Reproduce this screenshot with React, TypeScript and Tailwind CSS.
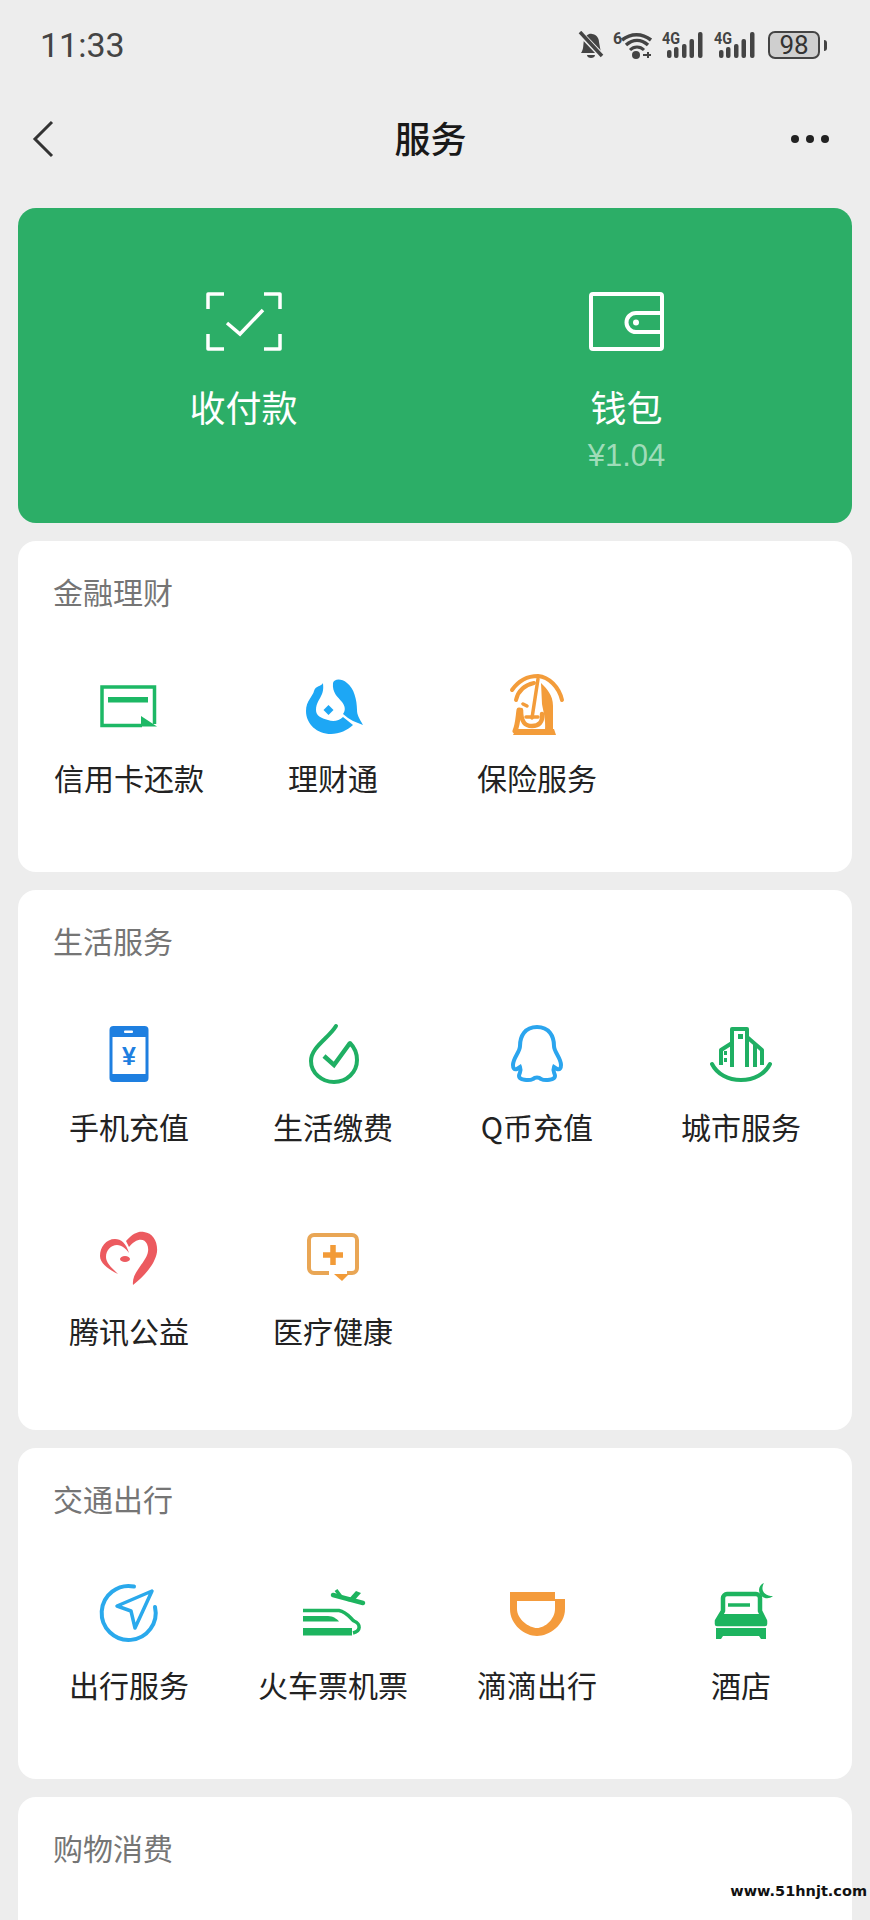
import React from "react";

const cjk = "font-['Noto_Sans_CJK_SC','Liberation_Sans',sans-serif]";

const Svg = ({ children }: { children: React.ReactNode }) => (
  <svg width="64" height="64" viewBox="0 0 64 64" fill="none" className="block overflow-visible">{children}</svg>
);

const CardIcon = () => (
  <Svg>
    <path d="M45 51.5H5V13H57.5V50" stroke="#1DB865" strokeWidth="3.5" />
    <rect x="11" y="23" width="40" height="5.5" fill="#1DB865" />
    <path d="M44 42L60 52.5H44Z" fill="#1DB865" />
  </Svg>
);

const FishIcon = () => (
  <Svg>
    <path d="M32 9C33 5 40 4 46 9C53 14 56 26 56 36C56 41 58 44 62 51L52 47L47 44L42 40C45 36 44 32 41 28C37 23 31 19 32 9Z" fill="#1DA7F5" />
    <path d="M22 9C20 13 15 11 13 17C12 22 5 27 5 37C5 50 16 60 30 60C38 60 47 56 52 51L42 43C38 47 32 48 27 46C20 44 15 42 15 36C15 29 19 25 21 20C23 15 22 11 22 9Z" fill="#1DA7F5" />
    <path d="M27.5 31L32.5 36L27.5 41L22.5 36Z" fill="#1DA7F5" />
  </Svg>
);

const InsuranceIcon = () => (
  <Svg>
    <g stroke="#F39C3A" strokeLinecap="round">
      <path d="M7 16C14 6 24 2 33 2C44 3 54 13 57 26" strokeWidth="4" />
      <path d="M11 26C13 17 20 11 29 9" strokeWidth="4" />
      <path d="M33 5L27 44" strokeWidth="3.5" />
      <path d="M14 36C13 42 13 50 10 57" strokeWidth="5" />
      <path d="M16 36C16 48 20 52 27 52C34 52 38 48 37 40" strokeWidth="4.5" />
      <path d="M18 30L22 32" strokeWidth="3.5" />
      <path d="M21 43H33" strokeWidth="3.5" />
    </g>
    <path d="M36 9C42 15 48 21 48 32V56H40C41 46 38 36 37 30Z" fill="#F39C3A" />
    <path d="M8 61L11 55H49L51 61Z" fill="#F39C3A" />
  </Svg>
);

const PhoneIcon = () => (
  <Svg>
    <rect x="12.5" y="3" width="39" height="56" rx="4" fill="#1E7FE0" />
    <rect x="15.5" y="14" width="33" height="37" fill="#fff" />
    <rect x="27" y="7.5" width="9" height="2.5" rx="1" fill="#fff" />
    <text x="32" y="42" textAnchor="middle" fontSize="25" fontWeight="700" fill="#1E7FE0" fontFamily="Liberation Sans">¥</text>
  </Svg>
);

const LifeIcon = () => (
  <Svg>
    <path d="M35 3C28 15 10 24 10 38C10 50 21 59 33 59C46 59 56 49 56 37C56 30 53 24 49 20" stroke="#1FAF63" strokeWidth="4" strokeLinecap="round" />
    <path d="M23 33L33 42L49 20" stroke="#1FAF63" strokeWidth="4.5" />
  </Svg>
);

const QqIcon = () => (
  <Svg>
    <path d="M32 4C20 4 15 13 15 23C15 29 8 35 8 42C8 45 9 47 12 46L15 44C17 49 14 50 14 53C14 57 24 58 28 56C30 54 34 54 36 56C40 58 50 57 50 53C50 50 47 49 49 44L52 46C55 47 56 45 56 42C56 35 49 29 49 23C49 13 44 4 32 4Z" stroke="#2BA5EE" strokeWidth="4" />
  </Svg>
);

const CityIcon = () => (
  <Svg>
    <g stroke="#1FAF63" strokeWidth="4" strokeLinejoin="round">
      <path d="M3 41C8 51 19 57 32 57C45 57 56 51 61 41" strokeLinecap="round" />
      <path d="M23 44V6H38V44" />
      <path d="M12 42V27L23 20" />
      <path d="M38 14L53 27V42" />
      <path d="M46 22V44" />
    </g>
    <rect x="29" y="11" width="5" height="5" fill="#1FAF63" />
    <rect x="15" y="28" width="3" height="4" fill="#1FAF63" />
    <rect x="15" y="35" width="3" height="4" fill="#1FAF63" />
  </Svg>
);

const HeartIcon = () => (
  <Svg>
    <path d="M29 14C36 6 42 4 47 5C56 6 61 15 60 25C58 38 46 50 36 58C35 50 40 44 44 38C50 30 53 24 50 17C47 10 38 12 32 20Z" fill="#EC5A5F" />
    <path d="M32 26C29 16 24 12 18 12C9 12 3 20 3 29C3 37 13 43 21 47C15 41 9 36 9 30C9 23 14 18 20 18C25 18 29 22 32 26Z" fill="#EC5A5F" />
    <ellipse cx="28" cy="32" rx="5" ry="3" fill="#EC5A5F" />
  </Svg>
);

const MedicalIcon = () => (
  <Svg>
    <path d="M28 46H13A5 5 0 0 1 8 41V13A5 5 0 0 1 13 8H51A5 5 0 0 1 56 13V41A5 5 0 0 1 51 46H46" stroke="#E9A655" strokeWidth="4" />
    <path d="M33 47H48L41 54Z" fill="#F29B38" />
    <path d="M22 28H42M32 18V38" stroke="#F29B38" strokeWidth="5.5" />
  </Svg>
);

const NavIcon = () => (
  <Svg>
    <path d="M37 5.5A27 27 0 1 0 58 26" stroke="#2AA9EC" strokeWidth="4" strokeLinecap="round" />
    <path d="M55 10L20 25L34 30L38 47Z" stroke="#2AA9EC" strokeWidth="3.5" strokeLinejoin="round" />
  </Svg>
);

const TrainIcon = () => (
  <Svg>
    <path d="M32 14L62 22" stroke="#1DB45F" strokeWidth="4.5" strokeLinecap="round" />
    <path d="M55 10L46 20L52 21L60 12Z" fill="#1DB45F" />
    <path d="M35 9L41 17" stroke="#1DB45F" strokeWidth="3.5" />
    <path d="M2 29.5H38C46 31 50 38 53 40C60 43 60 50 52 52" stroke="#1DB45F" strokeWidth="3.5" />
    <path d="M2 35H27C32 35 36 38 38 40.5H2Z" fill="#1DB45F" />
    <rect x="2" y="47" width="49" height="7.5" fill="#1DB45F" />
  </Svg>
);

const DidiIcon = () => (
  <Svg>
    <path fillRule="evenodd" d="M5 11H50V18H60V28C60 44 44 55 32 55C20 55 5 44 5 28ZM12 20V28C12 38 24 47 32 47C40 47 50 38 50 28V20Z" fill="#F49B3C" />
  </Svg>
);

const HotelIcon = () => (
  <Svg>
    <path d="M14 30V17C14 15 16 13 18 13H47C49 13 51 15 51 17V30L56 40V43H8V40Z" stroke="#1DB45F" strokeWidth="4.5" strokeLinejoin="round" />
    <path d="M19 24H41" stroke="#1DB45F" strokeWidth="3.5" />
    <path d="M13 33H52L56 42H8Z" fill="#1DB45F" />
    <path d="M7 47H57V58H52L50 55H14L12 58H7Z" fill="#1DB45F" />
    <path d="M55 2C51 9 55 15 64 15C58 20 50 16 50 9C50 6 52 3 55 2Z" fill="#1DB45F" />
  </Svg>
);

const sections = [
  {
    title: "金融理财",
    pb: "pb-[75px]",
    items: [
      { label: "信用卡还款", icon: <CardIcon /> },
      { label: "理财通", icon: <FishIcon /> },
      { label: "保险服务", icon: <InsuranceIcon /> },
    ],
  },
  {
    title: "生活服务",
    pb: "pb-[80px]",
    items: [
      { label: "手机充值", icon: <PhoneIcon /> },
      { label: "生活缴费", icon: <LifeIcon /> },
      { label: "Q币充值", icon: <QqIcon /> },
      { label: "城市服务", icon: <CityIcon /> },
      { label: "腾讯公益", icon: <HeartIcon /> },
      { label: "医疗健康", icon: <MedicalIcon /> },
    ],
  },
  {
    title: "交通出行",
    pb: "pb-[75px]",
    items: [
      { label: "出行服务", icon: <NavIcon /> },
      { label: "火车票机票", icon: <TrainIcon /> },
      { label: "滴滴出行", icon: <DidiIcon /> },
      { label: "酒店", icon: <HotelIcon /> },
    ],
  },
];

const Signal = () => (
  <svg width="42" height="28" viewBox="0 0 42 28" className="block overflow-visible">
    <text x="0" y="13" fontSize="17" fontWeight="700" fill="#444" fontFamily="Roboto" textLength="18" lengthAdjust="spacingAndGlyphs">4G</text>
    <rect x="5" y="19" width="4.5" height="8" rx="2" fill="#444" />
    <rect x="12" y="16" width="4.5" height="11" rx="2" fill="#444" />
    <rect x="20" y="13" width="4.5" height="14" rx="2" fill="#444" />
    <rect x="27.5" y="8" width="4.5" height="19" rx="2" fill="#444" />
    <rect x="36" y="1" width="4.5" height="26" rx="2" fill="#444" />
  </svg>
);

export default function App() {
  return (
    <div className={`relative h-[1920px] w-[870px] overflow-hidden bg-[#ededed] ${cjk}`}>
      {/* status bar */}
      <div className="flex h-[90px] items-center justify-between pl-[40px] pr-[43px]">
        <span className="font-['Roboto',sans-serif] text-[34px] leading-none text-[#444]">11:33</span>
        <div className="flex items-center">
          <svg width="26" height="28" viewBox="0 0 26 28" className="block">
            <path d="M3 22C6 18 5 13 6 9C7 5 11 2 14 3C18 3 21 7 21 11L23 22Z" fill="#444" />
            <path d="M9 24H17C17 28 9 28 9 24Z" fill="#444" />
            <path d="M3 3L25 26" stroke="#ededed" strokeWidth="6" />
            <path d="M2 1L24 25" stroke="#444" strokeWidth="3.5" />
          </svg>
          <svg width="39" height="28" viewBox="0 0 39 28" className="ml-[9px] block overflow-visible">
            <text x="0" y="13" fontSize="16" fontWeight="700" fill="#444" fontFamily="Roboto">6</text>
            <path d="M9 9C18 2 29 2 38 9" stroke="#444" strokeWidth="3.5" fill="none" />
            <path d="M13 14C20 8 28 8 35 14" stroke="#444" strokeWidth="3.5" fill="none" />
            <path d="M17 19C21 15 27 15 31 19" stroke="#444" strokeWidth="3" fill="none" />
            <circle cx="23" cy="24" r="4" fill="#444" />
            <path d="M30 24H38M35 21V27" stroke="#444" strokeWidth="2" />
          </svg>
          <div className="ml-[10px]"><Signal /></div>
          <div className="ml-[10px]"><Signal /></div>
          <div className="ml-[12px] flex h-[28px] w-[52px] items-center justify-center rounded-[7px] border-[2.5px] border-[#444] bg-[#cfcfcf] font-['Roboto',sans-serif] text-[26px] leading-none text-[#333]">98</div>
          <div className="ml-[4px] h-[11px] w-[3px] rounded-r-sm bg-[#444]" />
        </div>
      </div>

      {/* nav */}
      <div className="mb-[20px] flex h-[98px] items-center pl-[32px] pr-[41px]">
        <div className="w-[100px]">
          <svg width="22" height="38" viewBox="0 0 22 38" className="block">
            <path d="M20 2L3 19L20 36" stroke="#333" strokeWidth="3" fill="none" />
          </svg>
        </div>
        <span className="mb-[4px] flex-1 text-center text-[36px] font-medium leading-none text-[#191919]">服务</span>
        <div className="flex w-[100px] justify-end gap-[7px]">
          <div className="h-[8px] w-[8px] rounded-full bg-[#222]" />
          <div className="h-[8px] w-[8px] rounded-full bg-[#222]" />
          <div className="h-[8px] w-[8px] rounded-full bg-[#222]" />
        </div>
      </div>

      {/* wallet card */}
      <div className="mx-[18px] grid h-[315px] grid-cols-2 rounded-[18px] bg-[#2cae67] px-[34px] pt-[84px] text-white">
        <div className="flex flex-col items-center">
          <svg width="76" height="59" viewBox="0 0 76 59" fill="none" stroke="#fff" strokeWidth="3.5" className="block">
            <path d="M18 2H2V17M58 2H74V17M18 57H2V42M58 57H74V42" strokeLinejoin="round" />
            <path d="M21 31L34 42L57 18" />
          </svg>
          <span className="mt-[31px] text-[36px] leading-[48px]">收付款</span>
        </div>
        <div className="flex flex-col items-center">
          <svg width="75" height="59" viewBox="0 0 75 59" fill="none" stroke="#fff" strokeWidth="4" className="block">
            <rect x="2" y="2" width="71" height="55" rx="2" />
            <path d="M73 21H47A9.5 9.5 0 0 0 47 40H73" />
            <circle cx="47" cy="30.5" r="3" fill="#fff" stroke="none" />
          </svg>
          <span className="mt-[31px] text-[36px] leading-[48px]">钱包</span>
          <span className="mt-[8px] font-['Liberation_Sans',sans-serif] text-[31px] leading-[36px] text-[#9fdcb9]">¥1.04</span>
        </div>
      </div>

      {/* service sections */}
      <div className="mt-[18px] flex flex-col gap-[18px] px-[18px]">
        {sections.map((s) => (
          <div key={s.title} className={`rounded-[18px] bg-white pl-[9px] pt-[30px] ${s.pb}`}>
            <div className="pl-[26px] text-[30px] leading-[40px] text-[#757575]">{s.title}</div>
            <div className="mt-[63px] grid grid-cols-[repeat(4,204px)] gap-y-[81px]">
              {s.items.map((it) => (
                <div key={it.label} className="flex flex-col items-center">
                  {it.icon}
                  <span className="mt-[19px] whitespace-nowrap text-[30px] leading-[40px] text-[#222]">{it.label}</span>
                </div>
              ))}
            </div>
          </div>
        ))}
        <div className="h-[300px] rounded-[18px] bg-white pl-[35px] pt-[30px]">
          <div className="text-[30px] leading-[40px] text-[#757575]">购物消费</div>
        </div>
      </div>

      {/* watermark */}
      <span className="absolute bottom-[18px] right-[3px] font-['DejaVu_Sans',sans-serif] text-[14.5px] font-bold leading-[22px] text-[#111]">www.51hnjt.com</span>
    </div>
  );
}
